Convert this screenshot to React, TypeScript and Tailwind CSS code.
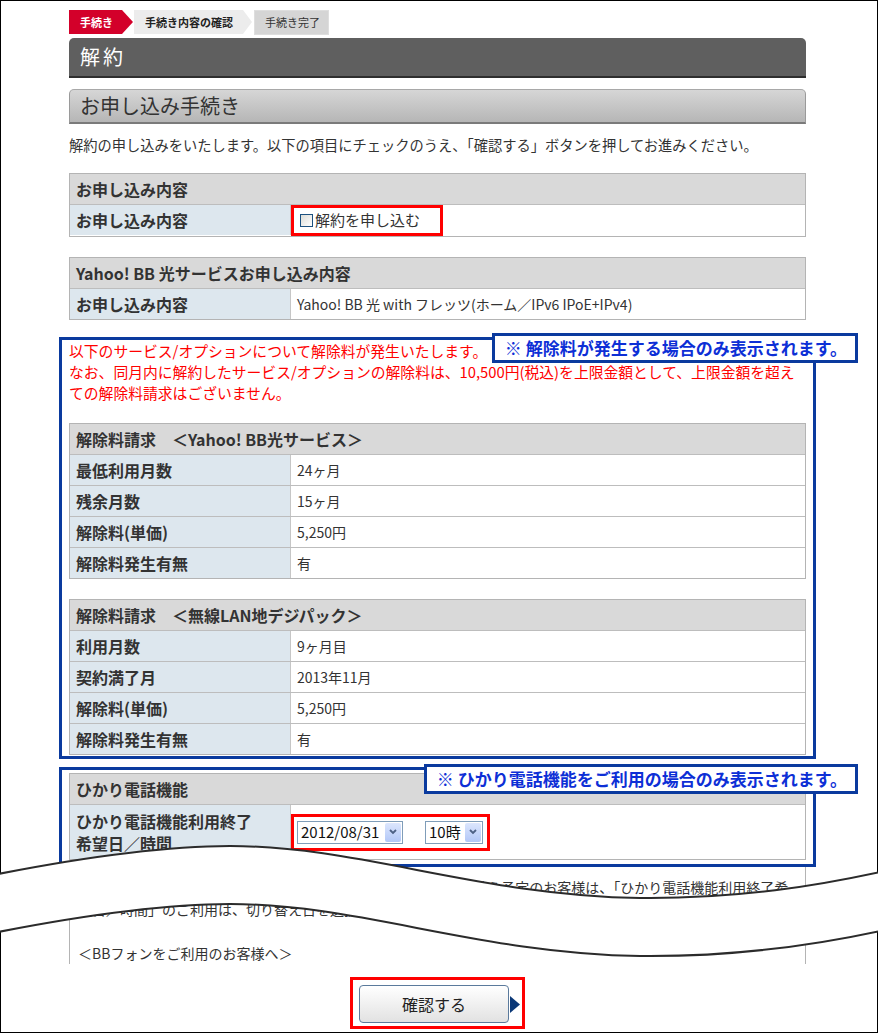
import type { ReactNode } from 'react';

type Row = {
  label: ReactNode;
  value: ReactNode;
  tall?: boolean;
  bare?: boolean;
};

const steps = [
  {
    label: '手続き',
    className:
      'w-[64px] h-[24px] bg-[#d3002a] text-white font-bold pl-[11px] [clip-path:polygon(0_0,calc(100%_-_11px)_0,100%_50%,calc(100%_-_11px)_100%,0_100%)]',
  },
  {
    label: '手続き内容の確認',
    className:
      'ml-[1px] w-[118px] h-[24px] bg-[#ececec] text-[#222] font-bold pl-[11px] [clip-path:polygon(0_0,calc(100%_-_9px)_0,100%_50%,calc(100%_-_9px)_100%,0_100%)]',
  },
  {
    label: '手続き完了',
    className:
      'ml-[2px] w-[75px] h-[25px] bg-[#d5d5d5] border border-[#dedede] text-[#333] pl-[10px]',
  },
];

function Breadcrumb() {
  return (
    <div className="flex h-[24px] items-start">
      {steps.map((step) => (
        <div
          key={step.label}
          className={`flex shrink-0 items-center text-[11px] leading-none ${step.className}`}
        >
          {step.label}
        </div>
      ))}
    </div>
  );
}

function InfoTable({ title, rows }: { title: string; rows: Row[] }) {
  return (
    <div className="border border-[#b4b4b4] bg-white">
      <div className="flex h-[30px] items-center bg-[#d9d9d9] px-[6px] text-[16px] font-bold text-[#333]">
        {title}
      </div>
      {rows.map((row, index) => (
        <div
          key={index}
          className="grid grid-cols-[221px_1fr] border-t border-[#bdbdbd]"
        >
          <div
            className={`flex items-center border-r border-[#c6c6c6] bg-[#dde7ee] px-[6px] text-[16px] font-bold text-[#333] ${
              row.tall ? 'py-[5px] leading-[22px]' : 'h-[30px]'
            }`}
          >
            {row.label}
          </div>
          <div
            className={`flex items-center text-[14px] text-[#333] ${
              row.bare ? '' : 'px-[6px]'
            }`}
          >
            {row.value}
          </div>
        </div>
      ))}
    </div>
  );
}

function Checkbox() {
  return (
    <span className="inline-block h-[13px] w-[13px] border border-[#1c5180] bg-linear-to-br from-[#dcdcd7] to-white" />
  );
}

function SelectBox({ value, className }: { value: string; className: string }) {
  return (
    <div
      className={`flex h-[23px] items-center border border-[#7f9db9] bg-white pl-[3px] text-[15px] text-[#111] ${className}`}
    >
      <span>{value}</span>
      <span className="mr-[1px] ml-auto flex h-[19px] w-[16px] items-center justify-center rounded-[2px] bg-linear-to-b from-[#dce6fd] to-[#b2c7f7]">
        <svg width="10" height="8" viewBox="0 0 10 8">
          <path
            d="M2 2 L5 5 L8 2"
            fill="none"
            stroke="#4d6185"
            strokeWidth="1.8"
          />
        </svg>
      </span>
    </div>
  );
}

function Notice({ text, className }: { text: string; className: string }) {
  return (
    <div
      className={`absolute flex h-[30px] items-center border-[3px] border-[#0a3a9e] bg-white pl-[10px] pr-[8px] text-[17px] font-bold text-[#0d2fd6] ${className}`}
    >
      {text}
    </div>
  );
}

function TornEdge() {
  return (
    <svg
      className="pointer-events-none absolute top-0 left-0"
      width="878"
      height="1033"
      viewBox="0 0 878 1033"
    >
      <path
        d="M-2 874 C80 858 160 846 230 846 C360 846 480 896 640 898 C740 899 820 885 880 872 L880 931 C820 944 740 957 640 956 C480 954 360 904 230 904 C160 904 80 916 -2 932 Z"
        fill="#fff"
      />
      <path
        d="M-2 874 C80 858 160 846 230 846 C360 846 480 896 640 898 C740 899 820 885 880 872"
        fill="none"
        stroke="#2b2b2b"
        strokeWidth="2"
      />
      <path
        d="M-2 932 C80 916 160 904 230 904 C360 904 480 954 640 956 C740 957 820 944 880 931"
        fill="none"
        stroke="#2b2b2b"
        strokeWidth="2"
      />
    </svg>
  );
}

export default function App() {
  return (
    <div className="relative h-[1033px] w-[878px] bg-white font-['Noto_Sans_CJK_JP',sans-serif] text-[#333]">
      <div className="h-full border border-black">
        <div className="ml-[68px] w-[737px] pt-[9px]">
          <Breadcrumb />

          <div className="mt-[4px] flex h-[40px] items-center rounded-t-[5px] border-b-2 border-[#2e2e2e] bg-[#5f5f5f] pl-[11px] text-[20px] tracking-[3px] text-white">
            解約
          </div>

          <div className="mt-[11px] flex h-[35px] items-center rounded-t-[5px] border-x border-t border-b-2 border-x-[#9a9a9a] border-t-[#a8a8a8] border-b-[#7a7a7a] bg-linear-to-b from-[#d6d6d6] to-[#b6b6b6] pl-[10px] text-[20px] text-[#333]">
            お申し込み手続き
          </div>

          <p className="mt-[10px] text-[14.25px] leading-[21px] text-[#333]">
            解約の申し込みをいたします。以下の項目にチェックのうえ、「確認する」ボタンを押してお進みください。
          </p>

          <div className="mt-[18px]">
            <InfoTable
              title="お申し込み内容"
              rows={[
                {
                  label: 'お申し込み内容',
                  bare: true,
                  value: (
                    <div className="flex h-[31px] w-[152px] items-center gap-[2px] border-[3px] border-[#ff0000] pl-[6px] text-[15px]">
                      <Checkbox />
                      <span>解約を申し込む</span>
                    </div>
                  ),
                },
              ]}
            />
          </div>

          <div className="mt-[20px]">
            <InfoTable
              title="Yahoo! BB 光サービスお申し込み内容"
              rows={[
                {
                  label: 'お申し込み内容',
                  value: 'Yahoo! BB 光 with フレッツ(ホーム／IPv6 IPoE+IPv4)',
                },
              ]}
            />
          </div>

          <div className="relative -mx-[10px] mt-[17px] border-[3px] border-[#0a3a9e] px-[7px] pb-[1px]">
            <p className="text-[14.8px] leading-[21px] text-[#ff0000]">
              以下のサービス/オプションについて解除料が発生いたします。
              <br />
              なお、同月内に解約したサービス/オプションの解除料は、10,500円(税込)を上限金額として、上限金額を超え
              <br />
              ての解除料請求はございません。
            </p>
            <div className="mt-[20px]">
              <InfoTable
                title="解除料請求　＜Yahoo! BB光サービス＞"
                rows={[
                  { label: '最低利用月数', value: '24ヶ月' },
                  { label: '残余月数', value: '15ヶ月' },
                  { label: '解除料(単価)', value: '5,250円' },
                  { label: '解除料発生有無', value: '有' },
                ]}
              />
            </div>
            <div className="mt-[20px]">
              <InfoTable
                title="解除料請求　＜無線LAN地デジパック＞"
                rows={[
                  { label: '利用月数', value: '9ヶ月目' },
                  { label: '契約満了月', value: '2013年11月' },
                  { label: '解除料(単価)', value: '5,250円' },
                  { label: '解除料発生有無', value: '有' },
                ]}
              />
            </div>
            <Notice
              text="※ 解除料が発生する場合のみ表示されます。"
              className="top-[-7px] right-[-45px]"
            />
          </div>

          <div className="relative -mx-[10px] mt-[8px] border-[3px] border-[#0a3a9e] px-[7px] pt-[3px] pb-[4px]">
            <InfoTable
              title="ひかり電話機能"
              rows={[
                {
                  label: (
                    <span>
                      ひかり電話機能利用終了
                      <br />
                      希望日／時間
                    </span>
                  ),
                  tall: true,
                  bare: true,
                  value: (
                    <div className="flex items-center border-[3px] border-[#ff0000] pt-[4px] pr-[4px] pb-[4px] pl-[3px]">
                      <SelectBox value="2012/08/31" className="w-[106px]" />
                      <SelectBox value="10時" className="ml-[22px] w-[58px]" />
                    </div>
                  ),
                },
              ]}
            />
            <Notice
              text="※ ひかり電話機能をご利用の場合のみ表示されます。"
              className="top-[-6px] right-[-45px]"
            />
          </div>

          <div className="h-[97px] overflow-hidden border-x border-[#b4b4b4] px-[8px] pt-[9px] text-[14px] leading-[22px] whitespace-nowrap text-[#333]">
            ※ひかり電話機能のご利用を終了して、同時にBBフォンへ切り替え予定のお客様は、「ひかり電話機能利用終了希
            <br />
            望日／時間」のご利用は、切り替え日を選択してください。
            <br />
            <br />
            ＜BBフォンをご利用のお客様へ＞
          </div>

          <div className="mt-[13px] flex justify-center">
            <div className="flex items-center border-[3px] border-[#ff0000] pt-[5px] pr-[2px] pb-[3px] pl-[6px]">
              <button
                type="button"
                className="flex h-[38px] w-[150px] items-center justify-center rounded-[4px] border border-[#5b7a9c] bg-linear-to-b from-white to-[#e2e2e2] text-[16px] text-[#222]"
              >
                確認する
              </button>
              <svg className="ml-[1px]" width="10" height="17" viewBox="0 0 10 17">
                <path d="M0 0 L10 8.5 L0 17 Z" fill="#0b3877" />
              </svg>
            </div>
          </div>
        </div>
      </div>
      <TornEdge />
    </div>
  );
}
